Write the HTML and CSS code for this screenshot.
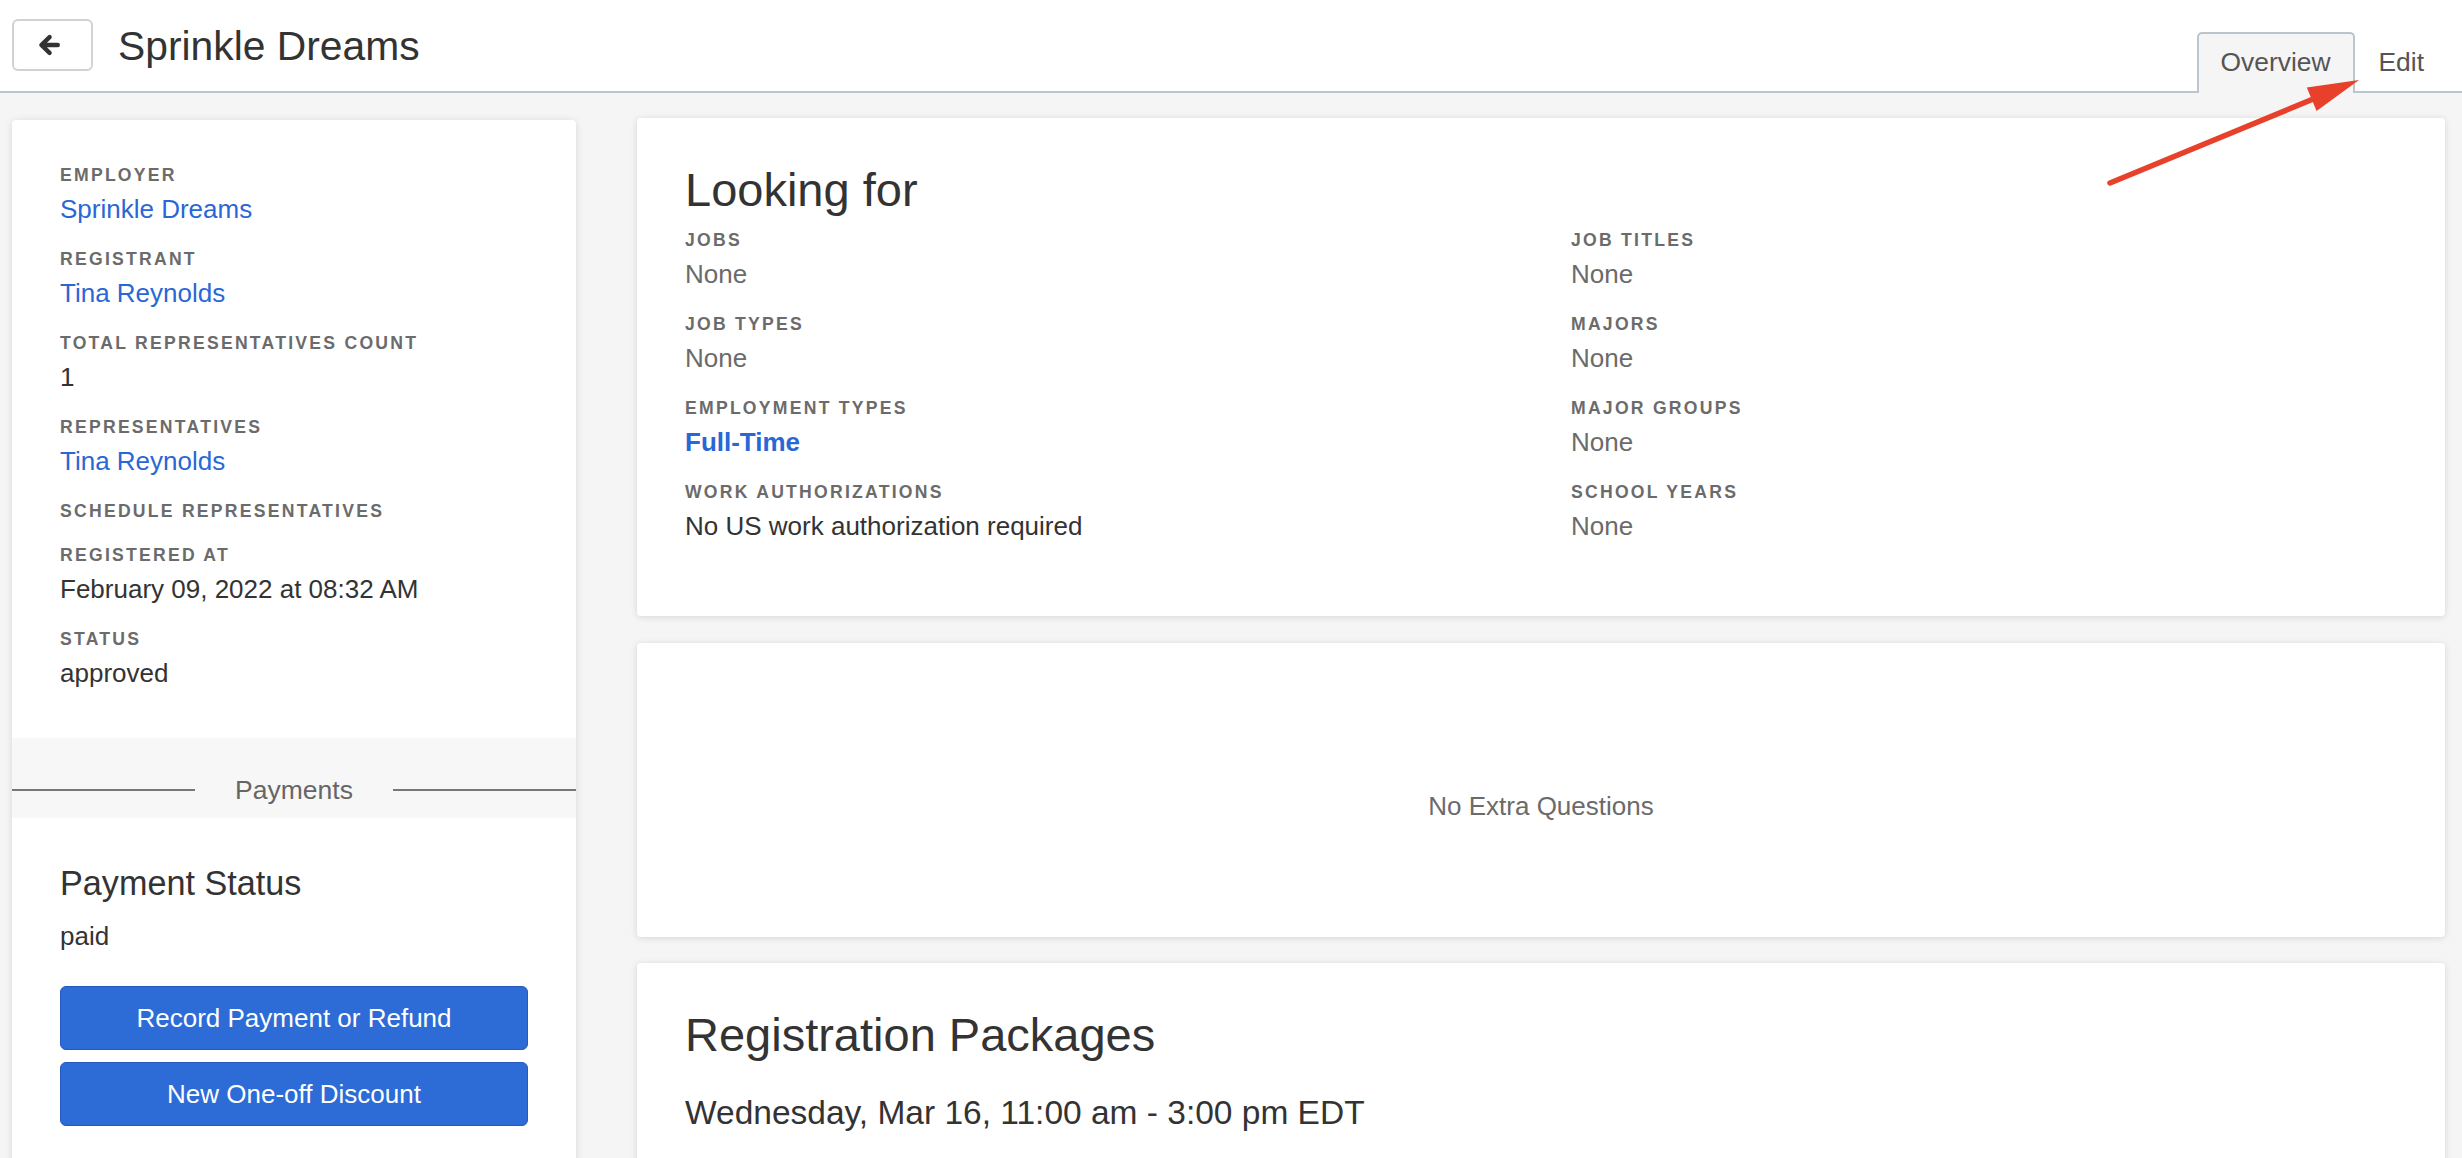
FILE: index.html
```html
<!DOCTYPE html>
<html lang="en">
<head>
<meta charset="utf-8">
<title>Sprinkle Dreams</title>
<link rel="stylesheet" href="styles.css">
</head>
<body>
<header class="topbar">
  <div class="title-group">
    <button class="back-btn" aria-label="Back">
      <svg width="28" height="28" viewBox="0 0 24 24"><path d="M19.5 12H6.5M12.5 5.2L5.5 12l7 6.8" fill="none" stroke="#333" stroke-width="3.8" stroke-linecap="round" stroke-linejoin="round"/></svg>
    </button>
    <h1 class="page-title">Sprinkle Dreams</h1>
  </div>
  <nav class="tabs">
    <a class="tab tab-active">Overview</a>
    <a class="tab">Edit</a>
  </nav>
</header>

<main class="layout">
  <aside class="side-card">
    <div class="side-details">
      <div class="field"><div class="label">Employer</div><div class="value link">Sprinkle Dreams</div></div>
      <div class="field"><div class="label">Registrant</div><div class="value link">Tina Reynolds</div></div>
      <div class="field"><div class="label">Total Representatives Count</div><div class="value">1</div></div>
      <div class="field"><div class="label">Representatives</div><div class="value link">Tina Reynolds</div></div>
      <div class="field"><div class="label">Schedule Representatives</div></div>
      <div class="field"><div class="label">Registered At</div><div class="value">February 09, 2022 at 08:32 AM</div></div>
      <div class="field"><div class="label">Status</div><div class="value">approved</div></div>
    </div>
    <div class="band">
      <div class="band-row"><span class="band-line"></span><span class="band-text">Payments</span><span class="band-line"></span></div>
    </div>
    <div class="payment">
      <h3 class="pay-title">Payment Status</h3>
      <div class="value pay-value">paid</div>
      <button class="primary-btn">Record Payment or Refund</button>
      <button class="primary-btn">New One-off Discount</button>
    </div>
  </aside>

  <section class="main-col">
    <div class="card looking">
      <h2 class="card-title">Looking for</h2>
      <div class="two-col">
        <div class="col">
          <div class="field"><div class="label">Jobs</div><div class="value muted">None</div></div>
          <div class="field"><div class="label">Job Types</div><div class="value muted">None</div></div>
          <div class="field"><div class="label">Employment Types</div><div class="value link strong">Full-Time</div></div>
          <div class="field"><div class="label">Work Authorizations</div><div class="value">No US work authorization required</div></div>
        </div>
        <div class="col">
          <div class="field"><div class="label">Job Titles</div><div class="value muted">None</div></div>
          <div class="field"><div class="label">Majors</div><div class="value muted">None</div></div>
          <div class="field"><div class="label">Major Groups</div><div class="value muted">None</div></div>
          <div class="field"><div class="label">School Years</div><div class="value muted">None</div></div>
        </div>
      </div>
    </div>

    <div class="card empty-card">
      <div class="value muted">No Extra Questions</div>
    </div>

    <div class="card packages">
      <h2 class="card-title">Registration Packages</h2>
      <div class="pkg-date">Wednesday, Mar 16, 11:00 am - 3:00 pm EDT</div>
    </div>
  </section>
</main>

<svg class="annotation" width="2462" height="1158" viewBox="0 0 2462 1158">
  <line x1="2110" y1="183" x2="2318" y2="97" stroke="#e8412b" stroke-width="5.5" stroke-linecap="round"/>
  <polygon points="2359,80 2316.6,111 2306.8,87.6" fill="#e8412b"/>
</svg>
</body>
</html>
```

FILE: styles.css
```css
* { box-sizing: border-box; }

html, body {
  margin: 0;
  padding: 0;
}

body {
  background: #f5f5f5;
  font-family: "Liberation Sans", Arial, Helvetica, sans-serif;
  color: #333;
  position: relative;
}

.topbar {
  display: flex;
  justify-content: space-between;
  height: 93px;
  background: #fff;
  border-bottom: 2px solid #bcc5ce;
  padding: 0 14px 0 12px;
}

.title-group {
  display: flex;
  align-items: center;
  gap: 25px;
  padding-bottom: 2px;
}

.back-btn {
  width: 81px;
  height: 52px;
  border: 2px solid #d2d2d2;
  border-radius: 6px;
  background: #fff;
  display: flex;
  align-items: center;
  justify-content: center;
  padding: 0 8px 0 0;
  margin: 0;
}

.page-title {
  margin: 0;
  font-size: 40.8px;
  font-weight: 400;
  color: #333;
  line-height: 48px;
  padding-top: 2px;
}

.tabs {
  align-self: flex-end;
  display: flex;
  margin-bottom: -2px;
}

.tab {
  height: 61px;
  padding: 0 22px;
  font-size: 26.4px;
  line-height: 57px;
  color: #555;
  border: 2px solid transparent;
  border-bottom: none;
  border-radius: 5px 5px 0 0;
}

.tab-active {
  background: #f5f5f5;
  border-color: #bcc5ce;
}

.layout {
  display: flex;
  align-items: flex-start;
  gap: 61px;
  padding: 25px 17px 0 12px;
}

.side-card {
  width: 564px;
  flex: none;
  margin-top: 2px;
  background: #fff;
  border-radius: 4px;
  box-shadow: 0 1px 7px rgba(0, 0, 0, 0.13);
  overflow: hidden;
}

.side-details {
  padding: 42px 48px 45px;
  display: flex;
  flex-direction: column;
  gap: 17px;
}

.field {
  display: flex;
  flex-direction: column;
}

.label {
  font-size: 17.6px;
  line-height: 27px;
  font-weight: 700;
  letter-spacing: 2.25px;
  text-transform: uppercase;
  color: #6b6b6b;
}

.value {
  font-size: 26px;
  line-height: 40px;
  color: #333;
}

.link { color: #2a67d6; }
.strong { font-weight: 700; }
.muted { color: #6b6b6b; }

.band {
  background: #f7f7f7;
  height: 80px;
  padding-top: 32px;
}

.band-row {
  display: flex;
  align-items: center;
  height: 40px;
}

.band-line {
  flex: 1;
  height: 2px;
  background: #777;
}

.band-text {
  padding: 0 40px;
  font-size: 26.5px;
  color: #666;
}

.payment {
  padding: 45px 48px 60px;
  display: flex;
  flex-direction: column;
}

.pay-title {
  margin: 0;
  font-size: 34.2px;
  line-height: 40px;
  font-weight: 400;
  color: #333;
}

.pay-value {
  margin-top: 13px;
  margin-bottom: 30px;
}

.primary-btn {
  height: 64px;
  width: 100%;
  margin: 0 0 12px;
  background: #2d6bd7;
  border: 1px solid #2459bd;
  border-radius: 6px;
  color: #fff;
  font-family: inherit;
  font-size: 26px;
}

.main-col {
  flex: 1;
  display: flex;
  flex-direction: column;
  gap: 26px;
}

.card {
  background: #fff;
  border-radius: 4px;
  box-shadow: 0 1px 7px rgba(0, 0, 0, 0.13);
}

.looking {
  padding: 46px 48px 70px;
}

.card-title {
  margin: 0 0 11px;
  font-size: 47px;
  line-height: 52px;
  font-weight: 400;
  color: #333;
}

.two-col {
  display: grid;
  grid-template-columns: 1fr 1fr;
  column-gap: 60px;
}

.col {
  display: flex;
  flex-direction: column;
  gap: 17px;
}

.empty-card {
  margin-top: 1px;
  padding: 143px 48px 111px;
  text-align: center;
}

.packages {
  padding: 46px 48px 120px;
}

.pkg-date {
  margin-top: 32px;
  font-size: 33.5px;
  line-height: 40px;
  color: #333;
}

.annotation {
  position: absolute;
  top: 0;
  left: 0;
  pointer-events: none;
}
```
